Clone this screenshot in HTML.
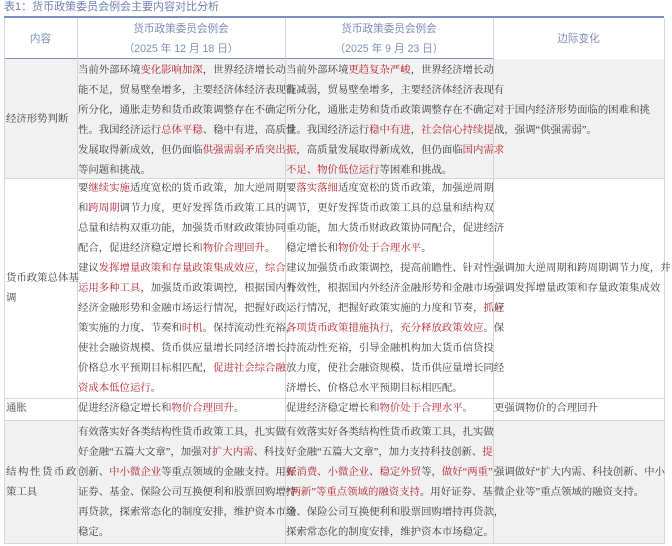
<!DOCTYPE html><html><head><meta charset="utf-8"><style>
body{margin:0;width:672px;height:546px;background:#fff;position:relative;overflow:hidden;font-family:"Liberation Serif","Noto Serif CJK SC",serif;font-size:10.4px;color:#3a3a3a}
.a{position:absolute;white-space:nowrap;line-height:20px}
.r{color:#b3212b}
.bg{position:absolute;background:#f1f1f1}
.v{position:absolute;width:1px;background:#d6d6d6}
.h{position:absolute;height:1px;background:#d6d6d6}
.hd{color:#7d8fb8;font-size:10.6px;text-align:center;font-family:"Liberation Sans","Noto Sans CJK SC",sans-serif}
</style></head><body>
<div class="a" style="left:4px;top:-3px;color:#6f82b2;font-size:11px;font-family:'Liberation Sans','Noto Sans CJK SC',sans-serif">表1：货币政策委员会例会主要内容对比分析</div>
<div style="position:absolute;left:4px;top:16px;width:377px;height:2px;background:#7d90bd"></div>
<div style="position:absolute;left:381px;top:16px;width:283px;height:2px;background:#7d90bd"></div>
<div class="bg" style="left:4px;top:59px;width:660px;height:119px"></div>
<div class="bg" style="left:4px;top:421px;width:660px;height:122px"></div>
<div class="h" style="left:4px;top:58px;width:490px;background:#7d90bd"></div>
<div class="h" style="left:4px;top:178px;width:660px"></div>
<div class="h" style="left:4px;top:398px;width:660px"></div>
<div class="h" style="left:4px;top:420px;width:660px"></div>
<div class="h" style="left:4px;top:543px;width:660px"></div>
<div class="v" style="left:4px;top:18px;height:526px"></div>
<div class="v" style="left:77px;top:18px;height:526px"></div>
<div class="v" style="left:285px;top:18px;height:526px"></div>
<div class="v" style="left:493px;top:18px;height:526px"></div>
<div class="v" style="left:664px;top:18px;height:526px"></div>
<div class="a hd" style="left:4px;top:29px;width:73px">内容</div>
<div class="a hd" style="left:77px;top:19px;width:208px">货币政策委员会例会</div>
<div class="a hd" style="left:77px;top:39px;width:208px">（2025 年 12 月 18 日）</div>
<div class="a hd" style="left:285px;top:19px;width:208px">货币政策委员会例会</div>
<div class="a hd" style="left:285px;top:39px;width:208px">（2025 年 9 月 23 日）</div>
<div class="a hd" style="left:493px;top:29px;width:171px">边际变化</div>

<div class="a" style="left:6px;top:110px">经济形势判断</div>
<div class="a" style="left:78px;top:61px">当前外部环境<span class="r">变化影响加深</span>，世界经济增长动<br>能不足，贸易壁垒增多，主要经济体经济表现有<br>所分化，通胀走势和货币政策调整存在不确定<br>性。我国经济运行<span class="r">总体平稳</span>、稳中有进，高质量<br>发展取得新成效，但仍面临<span class="r">供强需弱矛盾突出</span><br>等问题和挑战。</div>
<div class="a" style="left:286px;top:61px">当前外部环境<span class="r">更趋复杂严峻</span>，世界经济增长动<br>能减弱，贸易壁垒增多，主要经济体经济表现有<br>所分化，通胀走势和货币政策调整存在不确定<br>性。我国经济运行<span class="r">稳中有进</span>，<span class="r">社会信心持续提</span><br><span class="r">振</span>，高质量发展取得新成效，但仍面临<span class="r">国内需求</span><br><span class="r">不足、物价低位运行</span>等困难和挑战。</div>
<div class="a" style="left:494px;top:101px">对于国内经济形势面临的困难和挑<br>战，强调“供强需弱”。</div>

<div class="a" style="left:6px;top:269px">货币政策总体基<br>调</div>
<div class="a" style="left:78px;top:179px">要<span class="r">继续实施</span>适度宽松的货币政策，加大逆周期<br>和<span class="r">跨周期</span>调节力度，更好发挥货币政策工具的<br>总量和结构双重功能，加强货币财政政策协同<br>配合，促进经济稳定增长和<span class="r">物价合理回升</span>。<br>建议<span class="r">发挥增量政策和存量政策集成效应，综合</span><br><span class="r">运用多种工具</span>，加强货币政策调控，根据国内外<br>经济金融形势和金融市场运行情况，把握好政<br>策实施的力度、节奏和<span class="r">时机</span>。保持流动性充裕，<br>使社会融资规模、货币供应量增长同经济增长、<br>价格总水平预期目标相匹配，<span class="r">促进社会综合融</span><br><span class="r">资成本低位运行</span>。</div>
<div class="a" style="left:286px;top:179px">要<span class="r">落实落细</span>适度宽松的货币政策，加强逆周期<br>调节，更好发挥货币政策工具的总量和结构双<br>重功能，加大货币财政政策协同配合，促进经济<br>稳定增长和<span class="r">物价处于合理水平</span>。<br>建议加强货币政策调控，提高前瞻性、针对性、<br>有效性，根据国内外经济金融形势和金融市场<br>运行情况，把握好政策实施的力度和节奏，<span class="r">抓好</span><br><span class="r">各项货币政策措施执行，充分释放政策效应</span>。保<br>持流动性充裕，引导金融机构加大货币信贷投<br>放力度，使社会融资规模、货币供应量增长同经<br>济增长、价格总水平预期目标相匹配。</div>
<div class="a" style="left:494px;top:259px">强调加大逆周期和跨周期调节力度，并<br>强调发挥增量政策和存量政策集成效<br>应</div>

<div class="a" style="left:6px;top:399px">通胀</div>
<div class="a" style="left:78px;top:399px">促进经济稳定增长和<span class="r">物价合理回升</span>。</div>
<div class="a" style="left:286px;top:399px">促进经济稳定增长和<span class="r">物价处于合理水平</span>。</div>
<div class="a" style="left:494px;top:399px">更强调物价的合理回升</div>

<div class="a" style="left:6px;top:463px;letter-spacing:1.6px">结构性货币政<br><span style="letter-spacing:0">策工具</span></div>
<div class="a" style="left:78px;top:423px">有效落实好各类结构性货币政策工具，扎实做<br>好金融“五篇大文章”，加强对<span class="r">扩大内需</span>、科技<br>创新、<span class="r">中小微企业</span>等重点领域的金融支持。用好<br>证券、基金、保险公司互换便利和股票回购增持<br>再贷款，探索常态化的制度安排，维护资本市场<br>稳定。</div>
<div class="a" style="left:286px;top:423px">有效落实好各类结构性货币政策工具，扎实做<br>好金融“五篇大文章”，加力支持科技创新、<span class="r">提</span><br><span class="r">振消费、小微企业、稳定外贸</span>等，<span class="r">做好“两重”</span><br><span class="r">“两新”等重点领域的融资支持</span>。用好证券、基<br>金、保险公司互换便利和股票回购增持再贷款，<br>探索常态化的制度安排，维护资本市场稳定。</div>
<div class="a" style="left:494px;top:463px">强调做好“扩大内需、科技创新、中小<br>微企业等”重点领域的融资支持。</div>
</body></html>
